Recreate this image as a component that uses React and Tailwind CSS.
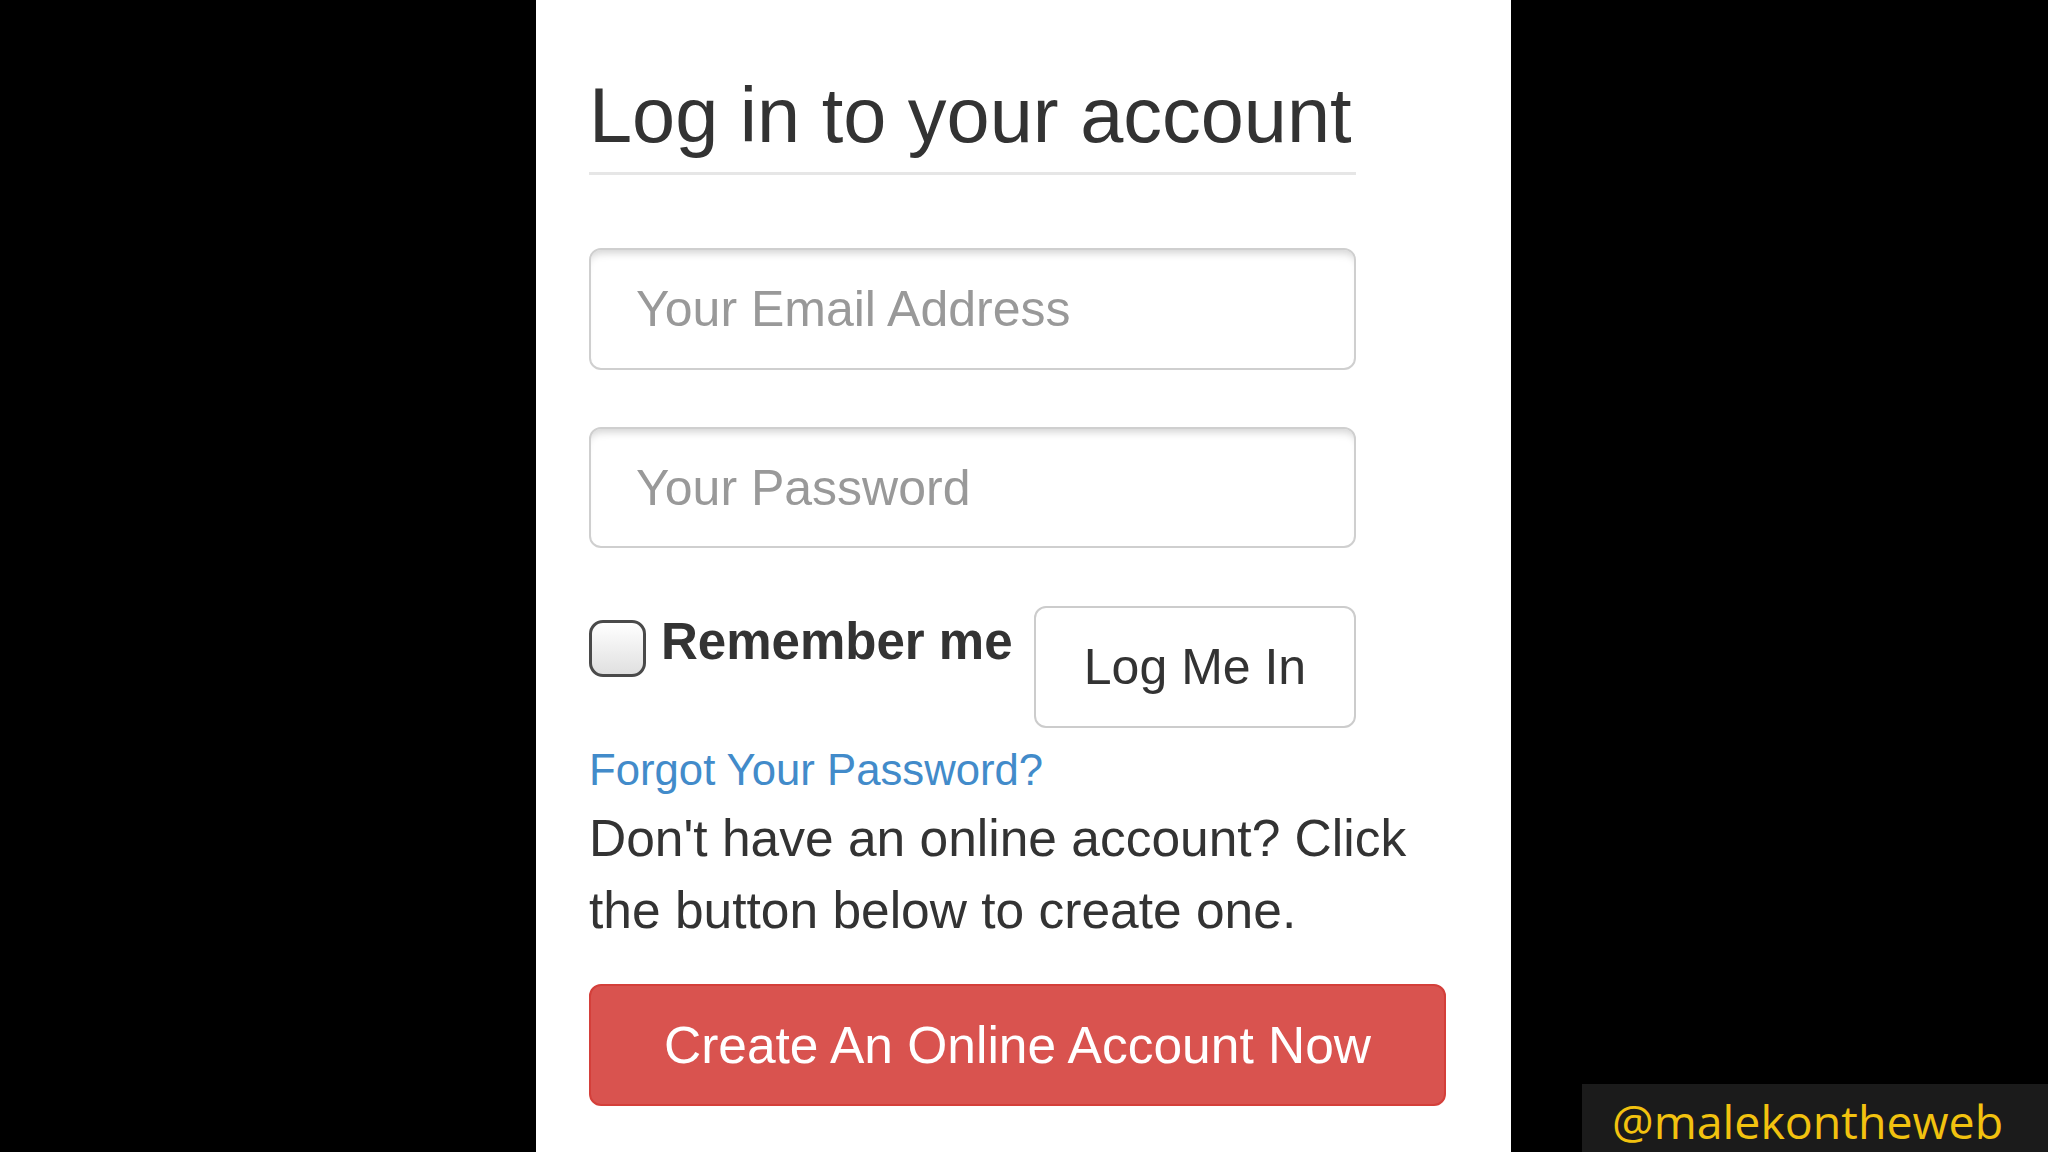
export default function App() {
  return (
    <div className="relative h-[1152px] w-full overflow-hidden bg-black font-['Liberation_Sans',Arial,sans-serif] text-[#333]">
      <div className="ml-[536px] h-full w-[975px] bg-white pl-[53px] pt-[77px]">
        <h1 className="w-[767px] whitespace-nowrap border-b-[3px] border-[#e6e6e6] pb-[18px] text-[77.5px] font-normal leading-[77px] text-[#333]">
          Log in to your account
        </h1>

        <form className="w-[767px]" onSubmit={(e) => e.preventDefault()}>
          <input
            type="email"
            placeholder="Your Email Address"
            className="mt-[73px] block h-[122px] w-full rounded-[12px] border-2 border-[#cfcfcf] bg-white px-[45px] text-[50px] shadow-[inset_0_9px_8px_-6px_rgba(0,0,0,0.18)] outline-none placeholder:text-[#999]"
          />
          <input
            type="password"
            placeholder="Your Password"
            className="mt-[57px] block h-[121px] w-full rounded-[12px] border-2 border-[#cfcfcf] bg-white px-[45px] text-[50px] shadow-[inset_0_9px_8px_-6px_rgba(0,0,0,0.18)] outline-none placeholder:text-[#999]"
          />

          <div className="mt-[58px] flex items-start justify-between">
            <label className="flex items-start">
              <span className="mt-[14px] block h-[57px] w-[57px] rounded-[14px] border-[3px] border-[#4a4a4a] bg-linear-to-b from-white to-[#e0e0e0]" />
              <span className="ml-[15px] mt-[10px] text-[51px] font-bold leading-[51px] text-[#333]">
                Remember me
              </span>
            </label>
            <button
              type="submit"
              className="flex h-[122px] w-[322px] items-center justify-center rounded-[12px] border-2 border-[#cccccc] bg-white text-[50px] leading-[50px] text-[#333]"
            >
              Log Me In
            </button>
          </div>
        </form>

        <a href="#" className="mt-[20px] block text-[43.7px] leading-[43px] text-[#428bca]">
          Forgot Your Password?
        </a>
        <p className="mt-[11px] w-[857px] text-[51.5px] leading-[72px] text-[#333]">
          Don't have an online account? Click the button below to create one.
        </p>
        <button className="mt-[38px] flex h-[122px] w-[857px] items-center justify-center rounded-[12px] border-2 border-[#d43f3a] bg-[#d9534f] text-[51.5px] leading-[51px] text-white">
          Create An Online Account Now
        </button>
      </div>

      <div className="absolute left-[1582px] top-[1084px] flex h-[68px] w-[466px] items-center bg-[#1b1b1b] pl-[30px] pt-[6px] font-['Open_Sans',sans-serif] text-[46.5px] leading-[62px] text-[#f2c20f]">
        @malekontheweb
      </div>
    </div>
  );
}
